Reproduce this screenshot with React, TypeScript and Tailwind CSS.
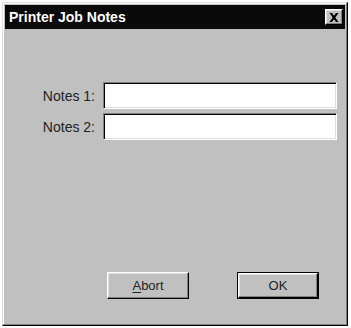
import React from "react";

const raised =
  "border border-t-white border-l-white border-b-black border-r-black shadow-[inset_-1px_-1px_0_#808080,inset_1px_1px_0_#dfdfdf]";

const frame =
  "border border-t-[#dfdfdf] border-l-[#dfdfdf] border-b-black border-r-black shadow-[inset_-1px_-1px_0_#808080,inset_1px_1px_0_#fff]";

const sunken =
  "border border-t-[#808080] border-l-[#808080] border-b-white border-r-white shadow-[inset_1px_1px_0_#000,inset_-1px_-1px_0_#dfdfdf]";

const Field = ({ label }: { label: string }) => (
  <>
    <label className="text-right text-[14px] text-[#222] leading-none">
      {label}
    </label>
    <input type="text" className={`h-[27px] w-[234px] bg-white outline-none ${sunken}`} />
  </>
);

export default function App() {
  return (
    <div
      className="w-[351px] h-[328px] bg-white pt-[2px] pl-[2px]"
      style={{ fontFamily: '"Liberation Sans", Arial, sans-serif' }}
    >
      <div className={`w-[346px] h-[324px] bg-[#c0c0c0] p-[2px] flex flex-col ${frame}`}>
        {/* Title bar */}
        <div className="h-[24px] bg-[#0a0a0a] flex items-center justify-between pl-[4px] pr-[2px]">
          <span className="text-white font-bold text-[14px] leading-none">
            Printer Job Notes
          </span>
          <button
            className={`w-[18px] h-[16px] bg-[#c0c0c0] flex items-center justify-center ${raised}`}
          >
            <svg width="10" height="9" viewBox="0 0 10 9">
              <path
                d="M0.5 0h2.5l2 2.8L7 0h2.5L6.3 4.5 9.5 9H7L5 6.2 3 9H0.5l3.2-4.5z"
                fill="#000"
              />
            </svg>
          </button>
        </div>

        {/* Fields */}
        <div className="mt-[53px] grid grid-cols-[90px_234px] gap-x-[8px] gap-y-[4px] items-center">
          <Field label="Notes 1:" />
          <Field label="Notes 2:" />
        </div>

        {/* Buttons */}
        <div className="mt-[132px] flex pl-[102px] gap-[48px]">
          <button
            className={`w-[82px] h-[27px] bg-[#c0c0c0] text-[13px] text-[#222] ${raised}`}
          >
            <span className="underline underline-offset-2">A</span>bort
          </button>
          <div className="border border-black">
            <button
              className={`w-[80px] h-[25px] bg-[#c0c0c0] text-[13px] text-[#222] ${raised}`}
            >
              OK
            </button>
          </div>
        </div>
      </div>
    </div>
  );
}
